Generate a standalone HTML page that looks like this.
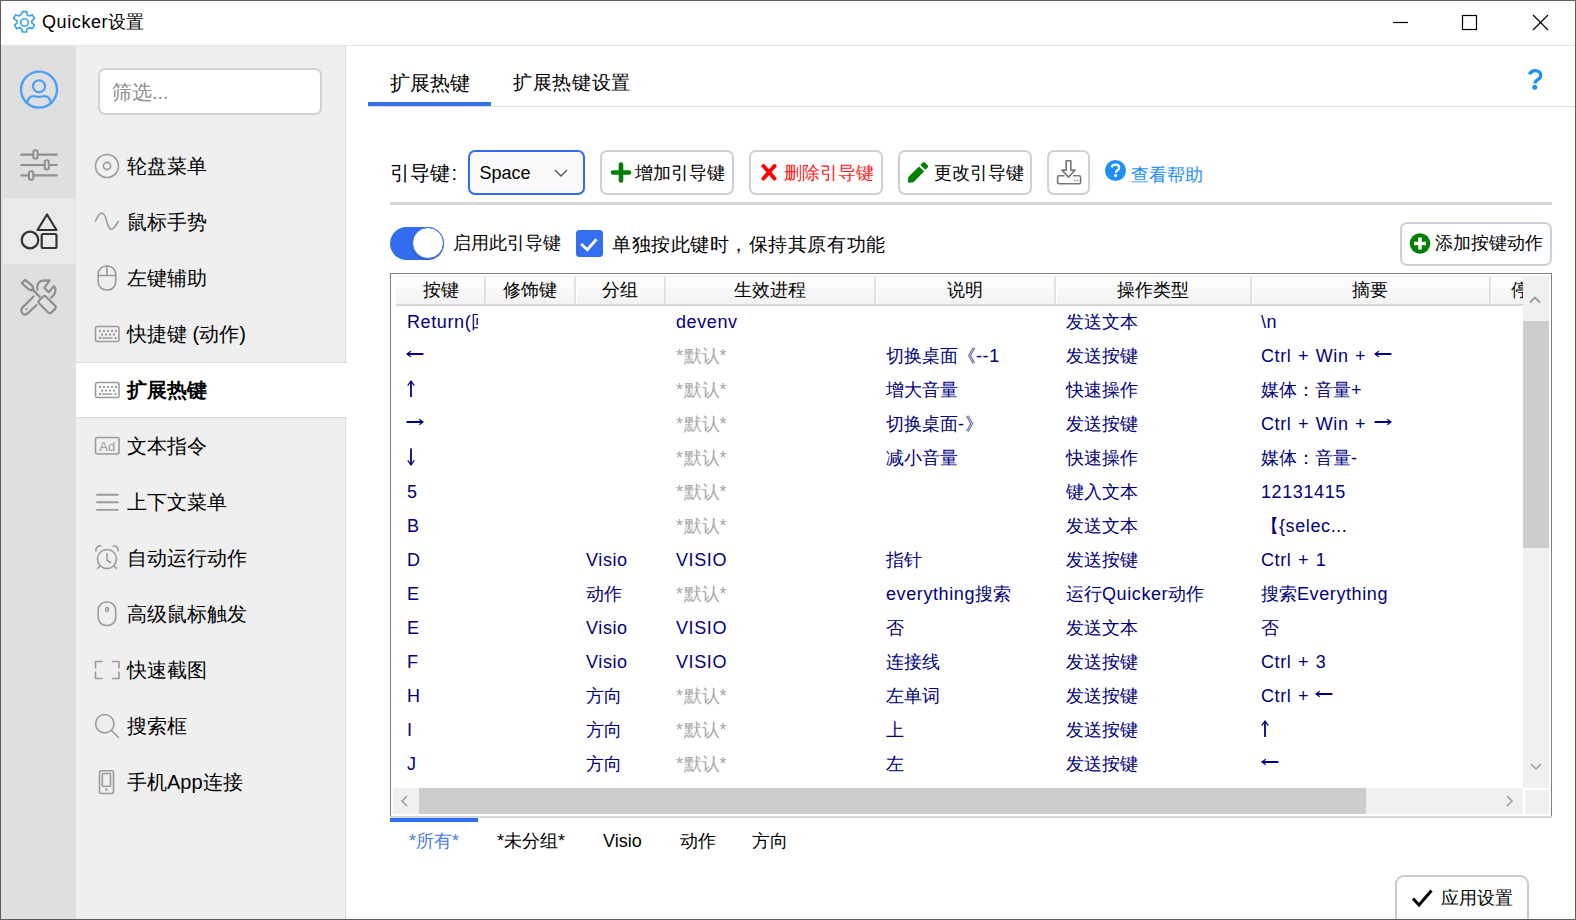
<!DOCTYPE html>
<html><head><meta charset="utf-8">
<style>
*{box-sizing:border-box;margin:0;padding:0}
html,body{width:1576px;height:920px;overflow:hidden;background:#fff;font-family:"Liberation Sans",sans-serif;color:#000}
.a{position:absolute}
.t{position:absolute;white-space:nowrap;line-height:1}
.frame{position:absolute;left:0;top:0;width:1576px;height:920px;border:1px solid #5c5c5c;pointer-events:none}
.rail{position:absolute;left:1px;top:46px;width:75px;height:873px;background:#dfdfdf}
.side{position:absolute;left:76px;top:46px;width:270px;height:873px;background:#efefef;border-right:1px solid #dadada}
.mi{position:absolute;left:127px;font-size:20px;line-height:1;white-space:nowrap}
.btn{position:absolute;top:150px;height:45px;border:2px solid #cdd2d9;border-radius:7px;background:#fff}
.bt{position:absolute;font-size:18px;line-height:1;white-space:nowrap;top:164px}
.hd{position:absolute;top:281px;font-size:18px;line-height:1;white-space:nowrap;text-align:center}
.c{position:absolute;font-size:18px;line-height:1;white-space:nowrap;color:#000080}
.g{color:#a8a8a8}
.l{letter-spacing:0.6px;word-spacing:1px}
</style></head><body>

<!-- title bar -->
<div class="a" style="left:0;top:45px;width:1576px;height:1px;background:#e2e2e2"></div>
<svg class="a" style="left:11.5px;top:10.2px" width="25" height="25" viewBox="0 0 24 24">
 <path d="M10 1.5h4l.6 3.1 1.9 1.1 3-1 2 3.4-2.4 2.1v2.2l2.4 2.1-2 3.4-3-1-1.9 1.1-.6 3.1h-4l-.6-3.1-1.9-1.1-3 1-2-3.4 2.4-2.1v-2.2L1.5 8.1l2-3.4 3 1 1.9-1.1z" fill="none" stroke="#3ea2f2" stroke-width="1.6" stroke-linejoin="round"/>
 <circle cx="12" cy="12" r="3.6" fill="none" stroke="#3ea2f2" stroke-width="1.6"/>
</svg>
<div class="t" style="left:42px;top:13px;font-size:18px"><span class="l">Quicker</span>设置</div>
<svg class="a" style="left:1390px;top:10px" width="160" height="26" viewBox="0 0 160 26">
 <path d="M3 12.5h15" stroke="#000" stroke-width="1.2"/>
 <rect x="72.5" y="5.5" width="14" height="14" fill="none" stroke="#000" stroke-width="1.2"/>
 <path d="M143 5l15 15M158 5l-15 15" stroke="#000" stroke-width="1.2"/>
</svg>

<!-- left rail -->
<div class="rail"></div>
<div class="a" style="left:3px;top:198px;width:72px;height:66px;background:#e9e9e9"></div>
<svg class="a" style="left:19px;top:70px" width="40" height="40" viewBox="0 0 40 40">
 <circle cx="20" cy="19.6" r="18" fill="none" stroke="#4aa0f4" stroke-width="2.4"/>
 <circle cx="20" cy="16.3" r="6" fill="none" stroke="#4aa0f4" stroke-width="2.2"/>
 <path d="M8.2 32.5c1-4.5 3.8-6.3 6.5-6.3 2 0 3 .7 5.3.7s3.3-.7 5.3-.7c2.7 0 5.5 1.8 6.5 6.3" fill="none" stroke="#4aa0f4" stroke-width="2.2"/>
</svg>
<svg class="a" style="left:15px;top:140px" width="50" height="50" viewBox="0 0 50 50">
 <g stroke="#8f8f8f" stroke-width="2.2" fill="none" stroke-linecap="round">
 <path d="M6.3 14.6h35.5M6.3 25h35.5M6.3 35.3h35.5"/>
 </g>
 <g stroke="#8f8f8f" stroke-width="2" fill="#e0e0e0">
 <rect x="18.4" y="10.2" width="4.2" height="8.4" rx="1.6"/>
 <rect x="29.8" y="20.3" width="4" height="9.1" rx="1.6"/>
 <rect x="14" y="31.2" width="4.3" height="8.5" rx="1.6"/>
 </g>
</svg>
<svg class="a" style="left:19px;top:210px" width="40" height="42" viewBox="0 0 40 42">
 <g stroke="#333" stroke-width="2.2" fill="none" stroke-linejoin="round">
 <path d="M28 4.5l-9.5 15.5h19z"/>
 <circle cx="11" cy="30" r="8.3"/>
 <rect x="22.7" y="24" width="14.8" height="14" rx="1.5"/>
 </g>
</svg>
<svg class="a" style="left:19px;top:276px" width="40" height="42" viewBox="0 0 40 42">
 <g stroke="#8d8d8d" stroke-width="2.2" fill="none" stroke-linejoin="round" stroke-linecap="round">
 <path d="M2.6 7.2L6.2 3.8L13.6 10.2L14.3 12.6L12.6 14.3L10 13.5Z"/>
 <path d="M13.4 13.4L20.6 20.6"/>
 <path d="M22.3 22.3l1.6-1.6c.9-.9 2.3-.9 3.2 0l9 9c.9.9.9 2.3 0 3.2l-3.6 3.6c-.9.9-2.3.9-3.2 0l-9-9c-.9-.9-.9-2.3 0-3.2z"/>
 <path d="M18.4 13.6C17.5 9 19.5 5.5 23.2 4.6L30.6 4.4L25.3 11.8L29.7 16.2L34.9 10.1C37.2 12.4 37.6 17.6 32.3 21.4"/>
 <path d="M14.5 20.5L3.6 31.4C1.6 33.4 2 36.5 4 37.8C5.6 38.8 7.5 38.5 8.6 37.4L17.5 29.2"/>
 </g>
 <circle cx="7.5" cy="33.2" r="1.1" fill="#8d8d8d"/>
</svg>

<!-- sidebar -->
<div class="side"></div>
<div class="a" style="left:98px;top:68px;width:224px;height:47px;background:#fff;border:2px solid #cfd3d9;border-radius:7px"></div>
<div class="t" style="left:112px;top:82px;font-size:20px;color:#8c8c8c">筛选...</div>

<div class="a" style="left:76px;top:362px;width:271px;height:56px;background:#fff;border-top:1px solid #dcdcdc;border-bottom:1px solid #dcdcdc"></div>

<svg class="a" style="left:90px;top:140px" width="36" height="660" viewBox="0 0 36 660">
 <g stroke="#9b9b9b" stroke-width="1.6" fill="none" stroke-linecap="round" stroke-linejoin="round">
 <!-- radio 166 -->
 <circle cx="17" cy="26" r="11.5"/>
 <circle cx="17" cy="26" r="3.6"/>
 <!-- wave 222 -->
 <path d="M5.3 81c2-3 4-8 6-8s4 3 5 7 3 9.5 5 9.5 4-3 7-8"/>
 <!-- mouse 278 -->
 <rect x="8.2" y="126" width="17.5" height="24" rx="8"/>
 <path d="M8.2 135.5h17.5M17 126v9.5"/>
 <!-- keyboard 334 -->
 <rect x="5.5" y="186.5" width="23.5" height="15" rx="2"/>
 <!-- keyboard 390 -->
 <rect x="5.5" y="242.5" width="23.5" height="15" rx="2"/>
 <!-- Ad 446 -->
 <rect x="5.5" y="297.5" width="23.5" height="16.5" rx="2"/>
 <!-- hamburger 502 -->
 <path d="M7 354.7h20.8M7 362.3h20.8M7 369.9h20.8" stroke-width="1.9"/>
 <!-- alarm 558 -->
 <circle cx="17" cy="419" r="9.5"/>
 <path d="M17 413.5v7l3.5 2"/>
 <path d="M5.8 411c0-3 2-5 5-5M28.2 411c0-3-2-5-5-5"/>
 <path d="M10 426l-2.5 2.5M24 426l2.5 2.5"/>
 <!-- mouse 614 -->
 <rect x="8.2" y="462" width="17.5" height="23.5" rx="8"/>
 <rect x="15.8" y="467.5" width="2.6" height="4" rx="1.3"/>
 <!-- screenshot 670 -->
 <path d="M5.5 528v-6.5h6.5M22.5 521.5h6.5v6.5M29 532v6.5h-6.5M12 538.5h-6.5V532"/>
 <!-- search 726 -->
 <circle cx="14.8" cy="583.7" r="9.2"/>
 <path d="M21.5 590.5l7 7"/>
 <!-- phone 782 -->
 <rect x="9.5" y="630.7" width="14" height="22.8" rx="2"/>
 <rect x="12.3" y="633.5" width="8.2" height="12.7" rx=".5"/>
 </g>
 <g fill="#9b9b9b">
 <circle cx="16.3" cy="649.5" r="1.3"/>
 </g>
 <g fill="#999">
  <rect x="9" y="190" width="2" height="2"/><rect x="13" y="190" width="2" height="2"/><rect x="17" y="190" width="2" height="2"/><rect x="21" y="190" width="2" height="2"/><rect x="25" y="190" width="2" height="2"/>
  <rect x="11" y="193.5" width="2" height="2"/><rect x="15" y="193.5" width="2" height="2"/><rect x="19" y="193.5" width="2" height="2"/><rect x="23" y="193.5" width="2" height="2"/>
  <rect x="9" y="197" width="2" height="2"/><rect x="12" y="197.3" width="10.5" height="1.4"/><rect x="24.5" y="197" width="2" height="2"/>
  <rect x="9" y="246" width="2" height="2"/><rect x="13" y="246" width="2" height="2"/><rect x="17" y="246" width="2" height="2"/><rect x="21" y="246" width="2" height="2"/><rect x="25" y="246" width="2" height="2"/>
  <rect x="11" y="249.5" width="2" height="2"/><rect x="15" y="249.5" width="2" height="2"/><rect x="19" y="249.5" width="2" height="2"/><rect x="23" y="249.5" width="2" height="2"/>
  <rect x="9" y="253" width="2" height="2"/><rect x="12" y="253.3" width="10.5" height="1.4"/><rect x="24.5" y="253" width="2" height="2"/>
 </g>
 <text x="17.2" y="311" font-size="13" text-anchor="middle" fill="#9b9b9b" font-family="Liberation Sans">Ad</text>
</svg>

<div class="mi" style="top:156px">轮盘菜单</div>
<div class="mi" style="top:212px">鼠标手势</div>
<div class="mi" style="top:268px">左键辅助</div>
<div class="mi" style="top:324px">快捷键 (动作)</div>
<div class="mi" style="top:380px;font-weight:bold">扩展热键</div>
<div class="mi" style="top:436px">文本指令</div>
<div class="mi" style="top:492px">上下文菜单</div>
<div class="mi" style="top:548px">自动运行动作</div>
<div class="mi" style="top:604px">高级鼠标触发</div>
<div class="mi" style="top:660px">快速截图</div>
<div class="mi" style="top:716px">搜索框</div>
<div class="mi" style="top:772px">手机App连接</div>


<!-- tabs -->
<div class="t" style="left:390px;top:74px;font-size:19.5px">扩展热键</div>
<div class="t" style="left:513px;top:73px;font-size:19px;letter-spacing:.7px">扩展热键设置</div>
<div class="a" style="left:368px;top:106px;width:1208px;height:1px;background:#dedede"></div>
<div class="a" style="left:368px;top:102px;width:123px;height:4px;background:#3570ec"></div>
<svg class="a" style="left:1524px;top:66px" width="24" height="28" viewBox="0 0 24 28">
 <path d="M5.3 8.3c1.3-2.4 3.4-3.6 5.8-3.6 3.5 0 5.6 2.1 5.6 4.8 0 2.5-1.7 3.5-3.2 4.4-1.6.9-2.5 1.8-2.5 3.6" fill="none" stroke="#1e8fff" stroke-width="3.3"/>
 <circle cx="10.8" cy="21.3" r="2.5" fill="#1e8fff"/>
</svg>

<!-- toolbar -->
<div class="t" style="left:390px;top:163px;font-size:20px">引导键<span style="margin-left:1.5px">:</span></div>
<div class="a" style="left:468px;top:150px;width:117px;height:45px;border:2px solid #2f6cf3;border-radius:7px;background:#fafafa"></div>
<div class="t" style="left:479.5px;top:164px;font-size:18px">Space</div>
<svg class="a" style="left:553px;top:167.5px" width="16" height="10" viewBox="0 0 16 10"><path d="M2 2l6 6 6-6" fill="none" stroke="#555" stroke-width="1.4"/></svg>

<div class="btn" style="left:600px;width:134px"></div>
<svg class="a" style="left:610px;top:161px" width="22" height="23" viewBox="0 0 22 23"><path d="M11 3.5v16M3 11.5h16" stroke="#008000" stroke-width="4.6" stroke-linecap="round"/></svg>
<div class="bt" style="left:635px">增加引导键</div>

<div class="btn" style="left:749px;width:134px"></div>
<svg class="a" style="left:759px;top:162px" width="20" height="21" viewBox="0 0 20 21"><path d="M4.5 4l11 12.5M15.5 4l-11 12.5" stroke="#ff0000" stroke-width="4" stroke-linecap="round"/></svg>
<div class="bt" style="left:784px;color:#ff1a1a">删除引导键</div>

<div class="btn" style="left:898px;width:134px"></div>
<svg class="a" style="left:906px;top:160px" width="24" height="25" viewBox="0 0 24 25"><g fill="#008000"><path d="M2 22.8l.3-5.8L13 6.4l5.1 5.1L7.4 22.3z"/><path d="M14.4 5l2.4-2.4c.7-.6 1.6-.6 2.2 0l2.6 2.6c.6.6.6 1.5 0 2.2L19.2 9.8z"/></g></svg>
<div class="bt" style="left:934px">更改引导键</div>

<div class="btn" style="left:1047px;width:43px"></div>
<svg class="a" style="left:1055px;top:158px" width="28" height="28" viewBox="0 0 28 28">
 <g fill="none" stroke="#777" stroke-width="1.6" stroke-linejoin="round">
 <path d="M11.2 2.8h4.6v9.3h4.2l-6.5 7-6.5-7h4.2z"/>
 <path d="M9.5 17.8H4.2c-1 0-1.6.6-1.6 1.6v4.8c0 1 .6 1.6 1.6 1.6h19.8c1 0 1.6-.6 1.6-1.6v-4.8c0-1-.6-1.6-1.6-1.6h-6"/>
 </g>
 <circle cx="20" cy="22.5" r=".8" fill="#777"/><circle cx="22.5" cy="22.5" r=".8" fill="#777"/>
</svg>
<svg class="a" style="left:1104px;top:159px" width="24" height="24" viewBox="0 0 24 24">
 <circle cx="11.5" cy="11.5" r="10.5" fill="#1e8ff5"/>
 <path d="M7.6 8.3c.6-1.8 2-2.6 3.9-2.6 2.2 0 3.7 1.3 3.7 3 0 1.5-1 2.2-2 2.8-.9.6-1.4 1-1.4 2.3" fill="none" stroke="#fff" stroke-width="2.3"/>
 <circle cx="11.6" cy="16.4" r="1.5" fill="#fff"/>
</svg>
<div class="t" style="left:1131px;top:165.5px;font-size:18px;color:#1e8fff">查看帮助</div>

<div class="a" style="left:390px;top:202px;width:1162px;height:3px;background:#d5d5d5"></div>

<!-- row 2 -->
<div class="a" style="left:390px;top:227px;width:54px;height:33px;border-radius:17px;background:#336cef"></div>
<div class="a" style="left:412px;top:227px;width:32px;height:32px;border-radius:50%;background:#fff;border:1.2px solid #336cef;box-shadow:0 1px 2px rgba(0,0,0,.25)"></div>
<div class="t" style="left:453px;top:234px;font-size:18px">启用此引导键</div>
<div class="a" style="left:576px;top:230px;width:27px;height:27px;border-radius:3.5px;background:#336ef0"></div>
<svg class="a" style="left:576px;top:230px" width="27" height="27" viewBox="0 0 27 27"><path d="M5.2 13.9l6.1 5.8 9.2-10.4" fill="none" stroke="#fff" stroke-width="2.8"/></svg>
<div class="t" style="left:612px;top:235px;font-size:19px;letter-spacing:.55px">单独按此键时，保持其原有功能</div>

<div class="btn" style="left:1400px;top:222px;width:152px;height:44px"></div>
<svg class="a" style="left:1408px;top:231px" width="24" height="24" viewBox="0 0 24 24">
 <circle cx="12" cy="12.5" r="10.3" fill="#008000"/>
 <path d="M12 6.5v12M6 12.5h12" stroke="#fff" stroke-width="3.5"/>
</svg>
<div class="t" style="left:1435px;top:234px;font-size:18px">添加按键动作</div>



<!-- table -->
<div class="a" style="left:390px;top:273px;width:1162px;height:544px;border:1.5px solid #7c8088;border-bottom:none;background:#fff"></div>
<div class="a" style="left:390px;top:816px;width:1162px;height:2px;background:#d3d7dc"></div>
<div class="a" style="left:396px;top:276px;width:1127px;height:30px;background:linear-gradient(#fdfdfd,#f3f3f3);border-top:1px solid #ececec;border-bottom:2px solid #d6d6d6"></div>

<div class="a" style="left:484px;top:277px;width:2.5px;height:27px;background:#e0e0e0;border-right:1px solid #fdfdfd"></div>
<div class="a" style="left:574px;top:277px;width:2.5px;height:27px;background:#e0e0e0;border-right:1px solid #fdfdfd"></div>
<div class="a" style="left:664px;top:277px;width:2.5px;height:27px;background:#e0e0e0;border-right:1px solid #fdfdfd"></div>
<div class="a" style="left:874px;top:277px;width:2.5px;height:27px;background:#e0e0e0;border-right:1px solid #fdfdfd"></div>
<div class="a" style="left:1054px;top:277px;width:2.5px;height:27px;background:#e0e0e0;border-right:1px solid #fdfdfd"></div>
<div class="a" style="left:1250px;top:277px;width:2.5px;height:27px;background:#e0e0e0;border-right:1px solid #fdfdfd"></div>
<div class="a" style="left:1489px;top:277px;width:2.5px;height:27px;background:#e0e0e0;border-right:1px solid #fdfdfd"></div>
<div class="hd" style="left:396px;width:89px">按键</div>
<div class="hd" style="left:485px;width:90px">修饰键</div>
<div class="hd" style="left:575px;width:89px">分组</div>
<div class="hd" style="left:664px;width:211px">生效进程</div>
<div class="hd" style="left:875px;width:180px">说明</div>
<div class="hd" style="left:1055px;width:196px">操作类型</div>
<div class="hd" style="left:1251px;width:238px">摘要</div>
<div class="a" style="left:1491px;top:277px;width:32px;height:27px;overflow:hidden"><div class="t" style="left:20px;top:3.5px;font-size:18px">停用</div></div>
<div class="a" style="left:407px;top:311px;width:71px;height:24px;overflow:hidden"><div class="c" style="left:0;top:2px"><span class="l">Return(</span>回车)</div></div>
<div class="c" style="left:676px;top:313px"><span class="l">devenv</span></div>
<div class="c" style="left:1066px;top:313px">发送文本</div>
<div class="c" style="left:1261px;top:313px"><span class="l">\n</span></div>
<svg class="a" style="left:405.8px;top:349px" width="18" height="10" viewBox="0 0 18 10"><path d="M1.2 5H17.4" stroke="#000080" stroke-width="2"/><path d="M4.8 2.2L1 5l3.8 2.8" fill="none" stroke="#000080" stroke-width="1.2"/></svg>
<div class="c g" style="left:676px;top:347px"><span class="l">*</span>默认<span class="l">*</span></div>
<div class="c" style="left:886px;top:347px">切换桌面《<span class="l">--1</span></div>
<div class="c" style="left:1066px;top:347px">发送按键</div>
<svg class="a" style="left:1373.5px;top:349px" width="18" height="10" viewBox="0 0 18 10"><path d="M1.2 5H17.4" stroke="#000080" stroke-width="2"/><path d="M4.8 2.2L1 5l3.8 2.8" fill="none" stroke="#000080" stroke-width="1.2"/></svg>
<div class="c" style="left:1261px;top:347px"><span class="l">Ctrl + Win + </span></div>
<svg class="a" style="left:405.7px;top:380px" width="10" height="18" viewBox="0 0 10 18"><path d="M5 1.2V17" stroke="#000080" stroke-width="1.8"/><path d="M1.7 5.6L5 1l3.3 4.6" fill="none" stroke="#000080" stroke-width="1.2"/></svg>
<div class="c g" style="left:676px;top:381px"><span class="l">*</span>默认<span class="l">*</span></div>
<div class="c" style="left:886px;top:381px">增大音量</div>
<div class="c" style="left:1066px;top:381px">快速操作</div>
<div class="c" style="left:1261px;top:381px">媒体：音量<span class="l">+</span></div>
<svg class="a" style="left:406.0px;top:417px" width="18" height="10" viewBox="0 0 18 10"><path d="M0.6 5H16.8" stroke="#000080" stroke-width="2"/><path d="M13.2 2.2L17 5l-3.8 2.8" fill="none" stroke="#000080" stroke-width="1.2"/></svg>
<div class="c g" style="left:676px;top:415px"><span class="l">*</span>默认<span class="l">*</span></div>
<div class="c" style="left:886px;top:415px">切换桌面<span class="l">-</span>》</div>
<div class="c" style="left:1066px;top:415px">发送按键</div>
<svg class="a" style="left:1373.9px;top:417px" width="18" height="10" viewBox="0 0 18 10"><path d="M0.6 5H16.8" stroke="#000080" stroke-width="2"/><path d="M13.2 2.2L17 5l-3.8 2.8" fill="none" stroke="#000080" stroke-width="1.2"/></svg>
<div class="c" style="left:1261px;top:415px"><span class="l">Ctrl + Win + </span></div>
<svg class="a" style="left:405.5px;top:448px" width="10" height="18" viewBox="0 0 10 18"><path d="M5 0.6V16.6" stroke="#000080" stroke-width="1.8"/><path d="M1.7 12.4L5 17l3.3-4.6" fill="none" stroke="#000080" stroke-width="1.2"/></svg>
<div class="c g" style="left:676px;top:449px"><span class="l">*</span>默认<span class="l">*</span></div>
<div class="c" style="left:886px;top:449px">减小音量</div>
<div class="c" style="left:1066px;top:449px">快速操作</div>
<div class="c" style="left:1261px;top:449px">媒体：音量<span class="l">-</span></div>
<div class="c" style="left:407px;top:483px"><span class="l">5</span></div>
<div class="c g" style="left:676px;top:483px"><span class="l">*</span>默认<span class="l">*</span></div>
<div class="c" style="left:1066px;top:483px">键入文本</div>
<div class="c" style="left:1261px;top:483px"><span class="l">12131415</span></div>
<div class="c" style="left:407px;top:517px"><span class="l">B</span></div>
<div class="c g" style="left:676px;top:517px"><span class="l">*</span>默认<span class="l">*</span></div>
<div class="c" style="left:1066px;top:517px">发送文本</div>
<div class="c" style="left:1261px;top:517px">【<span class="l">{selec...</span></div>
<div class="c" style="left:407px;top:551px"><span class="l">D</span></div>
<div class="c" style="left:586px;top:551px"><span class="l">Visio</span></div>
<div class="c" style="left:676px;top:551px"><span class="l">VISIO</span></div>
<div class="c" style="left:886px;top:551px">指针</div>
<div class="c" style="left:1066px;top:551px">发送按键</div>
<div class="c" style="left:1261px;top:551px"><span class="l">Ctrl + 1</span></div>
<div class="c" style="left:407px;top:585px"><span class="l">E</span></div>
<div class="c" style="left:586px;top:585px">动作</div>
<div class="c g" style="left:676px;top:585px"><span class="l">*</span>默认<span class="l">*</span></div>
<div class="c" style="left:886px;top:585px"><span class="l">everything</span>搜索</div>
<div class="c" style="left:1066px;top:585px">运行<span class="l">Quicker</span>动作</div>
<div class="c" style="left:1261px;top:585px">搜索<span class="l">Everything</span></div>
<div class="c" style="left:407px;top:619px"><span class="l">E</span></div>
<div class="c" style="left:586px;top:619px"><span class="l">Visio</span></div>
<div class="c" style="left:676px;top:619px"><span class="l">VISIO</span></div>
<div class="c" style="left:886px;top:619px">否</div>
<div class="c" style="left:1066px;top:619px">发送文本</div>
<div class="c" style="left:1261px;top:619px">否</div>
<div class="c" style="left:407px;top:653px"><span class="l">F</span></div>
<div class="c" style="left:586px;top:653px"><span class="l">Visio</span></div>
<div class="c" style="left:676px;top:653px"><span class="l">VISIO</span></div>
<div class="c" style="left:886px;top:653px">连接线</div>
<div class="c" style="left:1066px;top:653px">发送按键</div>
<div class="c" style="left:1261px;top:653px"><span class="l">Ctrl + 3</span></div>
<div class="c" style="left:407px;top:687px"><span class="l">H</span></div>
<div class="c" style="left:586px;top:687px">方向</div>
<div class="c g" style="left:676px;top:687px"><span class="l">*</span>默认<span class="l">*</span></div>
<div class="c" style="left:886px;top:687px">左单词</div>
<div class="c" style="left:1066px;top:687px">发送按键</div>
<svg class="a" style="left:1315.3px;top:689px" width="18" height="10" viewBox="0 0 18 10"><path d="M1.2 5H17.4" stroke="#000080" stroke-width="2"/><path d="M4.8 2.2L1 5l3.8 2.8" fill="none" stroke="#000080" stroke-width="1.2"/></svg>
<div class="c" style="left:1261px;top:687px"><span class="l">Ctrl + </span></div>
<div class="c" style="left:407px;top:721px"><span class="l">I</span></div>
<div class="c" style="left:586px;top:721px">方向</div>
<div class="c g" style="left:676px;top:721px"><span class="l">*</span>默认<span class="l">*</span></div>
<div class="c" style="left:886px;top:721px">上</div>
<div class="c" style="left:1066px;top:721px">发送按键</div>
<svg class="a" style="left:1260.4px;top:720px" width="10" height="18" viewBox="0 0 10 18"><path d="M5 1.2V17" stroke="#000080" stroke-width="1.8"/><path d="M1.7 5.6L5 1l3.3 4.6" fill="none" stroke="#000080" stroke-width="1.2"/></svg>
<div class="c" style="left:407px;top:755px"><span class="l">J</span></div>
<div class="c" style="left:586px;top:755px">方向</div>
<div class="c g" style="left:676px;top:755px"><span class="l">*</span>默认<span class="l">*</span></div>
<div class="c" style="left:886px;top:755px">左</div>
<div class="c" style="left:1066px;top:755px">发送按键</div>
<svg class="a" style="left:1261px;top:757px" width="18" height="10" viewBox="0 0 18 10"><path d="M1.2 5H17.4" stroke="#000080" stroke-width="2"/><path d="M4.8 2.2L1 5l3.8 2.8" fill="none" stroke="#000080" stroke-width="1.2"/></svg>
<!-- v scrollbar -->
<div class="a" style="left:1523px;top:276px;width:26px;height:512px;background:#f0f0f0"></div>
<div class="a" style="left:1523px;top:321px;width:26px;height:227px;background:#cdcdcd"></div>
<svg class="a" style="left:1527px;top:292px" width="16" height="14" viewBox="0 0 16 14"><path d="M3 10.5l5-5 5 5" fill="none" stroke="#999" stroke-width="1.8"/></svg>
<svg class="a" style="left:1528px;top:761px" width="16" height="12" viewBox="0 0 16 12"><path d="M3 3l5 5 5-5" fill="none" stroke="#9a9a9a" stroke-width="1.5"/></svg>
<!-- h scrollbar -->
<div class="a" style="left:393px;top:788px;width:1130px;height:26px;background:#f0f0f0"></div>
<div class="a" style="left:419px;top:788px;width:947px;height:26px;background:#cdcdcd"></div>
<svg class="a" style="left:398px;top:793px" width="14" height="16" viewBox="0 0 14 16"><path d="M9 3L4 8l5 5" fill="none" stroke="#9a9a9a" stroke-width="1.5"/></svg>
<svg class="a" style="left:1502px;top:793px" width="14" height="16" viewBox="0 0 14 16"><path d="M5 3l5 5-5 5" fill="none" stroke="#9a9a9a" stroke-width="1.5"/></svg>
<div class="a" style="left:1525px;top:790px;width:24px;height:24px;background:#f0f0f0"></div>

<!-- bottom tabs -->
<div class="a" style="left:390px;top:818px;width:88px;height:4px;background:#3370ee"></div>
<div class="t" style="left:409px;top:832px;font-size:18px;color:#4a7cf5">*所有*</div>
<div class="t" style="left:497px;top:832px;font-size:18px">*未分组*</div>
<div class="t" style="left:603px;top:832px;font-size:18px">Visio</div>
<div class="t" style="left:680px;top:832px;font-size:18px">动作</div>
<div class="t" style="left:752px;top:832px;font-size:18px">方向</div>

<!-- apply -->
<div class="a" style="left:1395px;top:875px;width:134px;height:60px;border:2px solid #c6cbd3;border-radius:9px;background:#fff"></div>
<svg class="a" style="left:1410px;top:887px" width="26" height="22" viewBox="0 0 26 22"><path d="M3 11.5l6 6.5L21.5 3.5" fill="none" stroke="#000" stroke-width="3"/></svg>
<div class="t" style="left:1441px;top:889px;font-size:18px">应用设置</div>

<div class="frame"></div>
</body></html>
